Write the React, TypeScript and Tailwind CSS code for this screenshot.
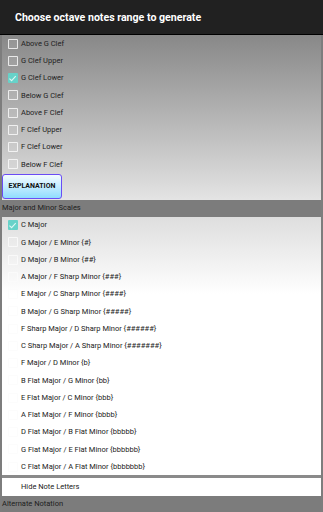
const octaves = [
  { label: 'Above G Clef', checked: false },
  { label: 'G Clef Upper', checked: false },
  { label: 'G Clef Lower', checked: true },
  { label: 'Below G Clef', checked: false },
  { label: 'Above F Clef', checked: false },
  { label: 'F Clef Upper', checked: false },
  { label: 'F Clef Lower', checked: false },
  { label: 'Below F Clef', checked: false },
];

const scales = [
  'C Major',
  'G Major / E Minor {#}',
  'D Major / B Minor {##}',
  'A Major / F Sharp Minor {###}',
  'E Major / C Sharp Minor {####}',
  'B Major / G Sharp Minor {#####}',
  'F Sharp Major / D Sharp Minor {######}',
  'C Sharp Major / A Sharp Minor {#######}',
  'F Major / D Minor {b}',
  'B Flat Major / G Minor {bb}',
  'E Flat Major / C Minor {bbb}',
  'A Flat Major / F Minor {bbbb}',
  'D Flat Major / B Flat Minor {bbbbb}',
  'G Flat Major / E Flat Minor {bbbbbb}',
  'C Flat Major / A Flat Minor {bbbbbbb}',
];

function Check({ checked }: { checked: boolean }) {
  if (checked) {
    return (
      <span className="flex h-[10px] w-[10px] items-center justify-center rounded-[1px] bg-[#67d2c9]">
        <svg viewBox="0 0 10 10" className="h-[9px] w-[9px]">
          <path d="M1.6 5.2 L4 7.4 L8.6 2.4" fill="none" stroke="#dff7f4" strokeWidth="1.2" />
        </svg>
      </span>
    );
  }
  return (
    <span className="h-[10px] w-[10px] rounded-[1px] border-[1.5px] border-[#fbfbfb]/80 bg-white/10" />
  );
}

function Row({ label, checked }: { label: string; checked: boolean }) {
  return (
    <div className="flex h-[17.25px] items-center">
      <span className="flex w-[19px] justify-center pl-[2px]">
        <Check checked={checked} />
      </span>
      <span className="text-[7.5px] leading-none text-[#222]">{label}</span>
    </div>
  );
}

export default function App() {
  return (
    <div className="flex h-[512px] w-[323px] flex-col overflow-hidden bg-[#212121] font-['Roboto',sans-serif]">
      <div className="flex h-[35px] shrink-0 items-center border-b border-black pb-[1px] pl-[15px]">
        <h1 className="pt-[2px] text-[10.6px] font-bold text-white">
          Choose octave notes range to generate
        </h1>
      </div>
      <div className="flex flex-1 flex-col border-x-2 border-[#7d7d7d]">
        <div className="bg-gradient-to-b from-[#888888] to-[#e4e4e4]">
          {octaves.map((o) => (
            <Row key={o.label} label={o.label} checked={o.checked} />
          ))}
          <div className="pb-[1px] pt-[0.5px]">
            <button className="flex h-[25px] w-[60px] items-center justify-center rounded-[3px] border border-[#6a4cf5] bg-gradient-to-b from-[#f4fcff] to-[#8fdcfe] text-[7px] font-bold text-[#111]">
              EXPLANATION
            </button>
          </div>
        </div>
        <div className="flex h-[17px] items-center bg-[#7c7c7c] text-[7.5px] text-[#1c1c1c]">
          Major and Minor Scales
        </div>
        <div className="bg-gradient-to-b from-[#dedede] via-white via-30% to-white">
          {scales.map((s, i) => (
            <Row key={s} label={s} checked={i === 0} />
          ))}
        </div>
        <div className="h-[3px] bg-[#8a8a8a]" />
        <div className="flex h-[17.5px] items-center bg-white pl-[19px] text-[7.5px] text-[#222]">
          Hide Note Letters
        </div>
        <div className="flex flex-1 items-center bg-[#7c7c7c] text-[7.5px] text-[#1c1c1c]">
          Alternate Notation
        </div>
      </div>
    </div>
  );
}
